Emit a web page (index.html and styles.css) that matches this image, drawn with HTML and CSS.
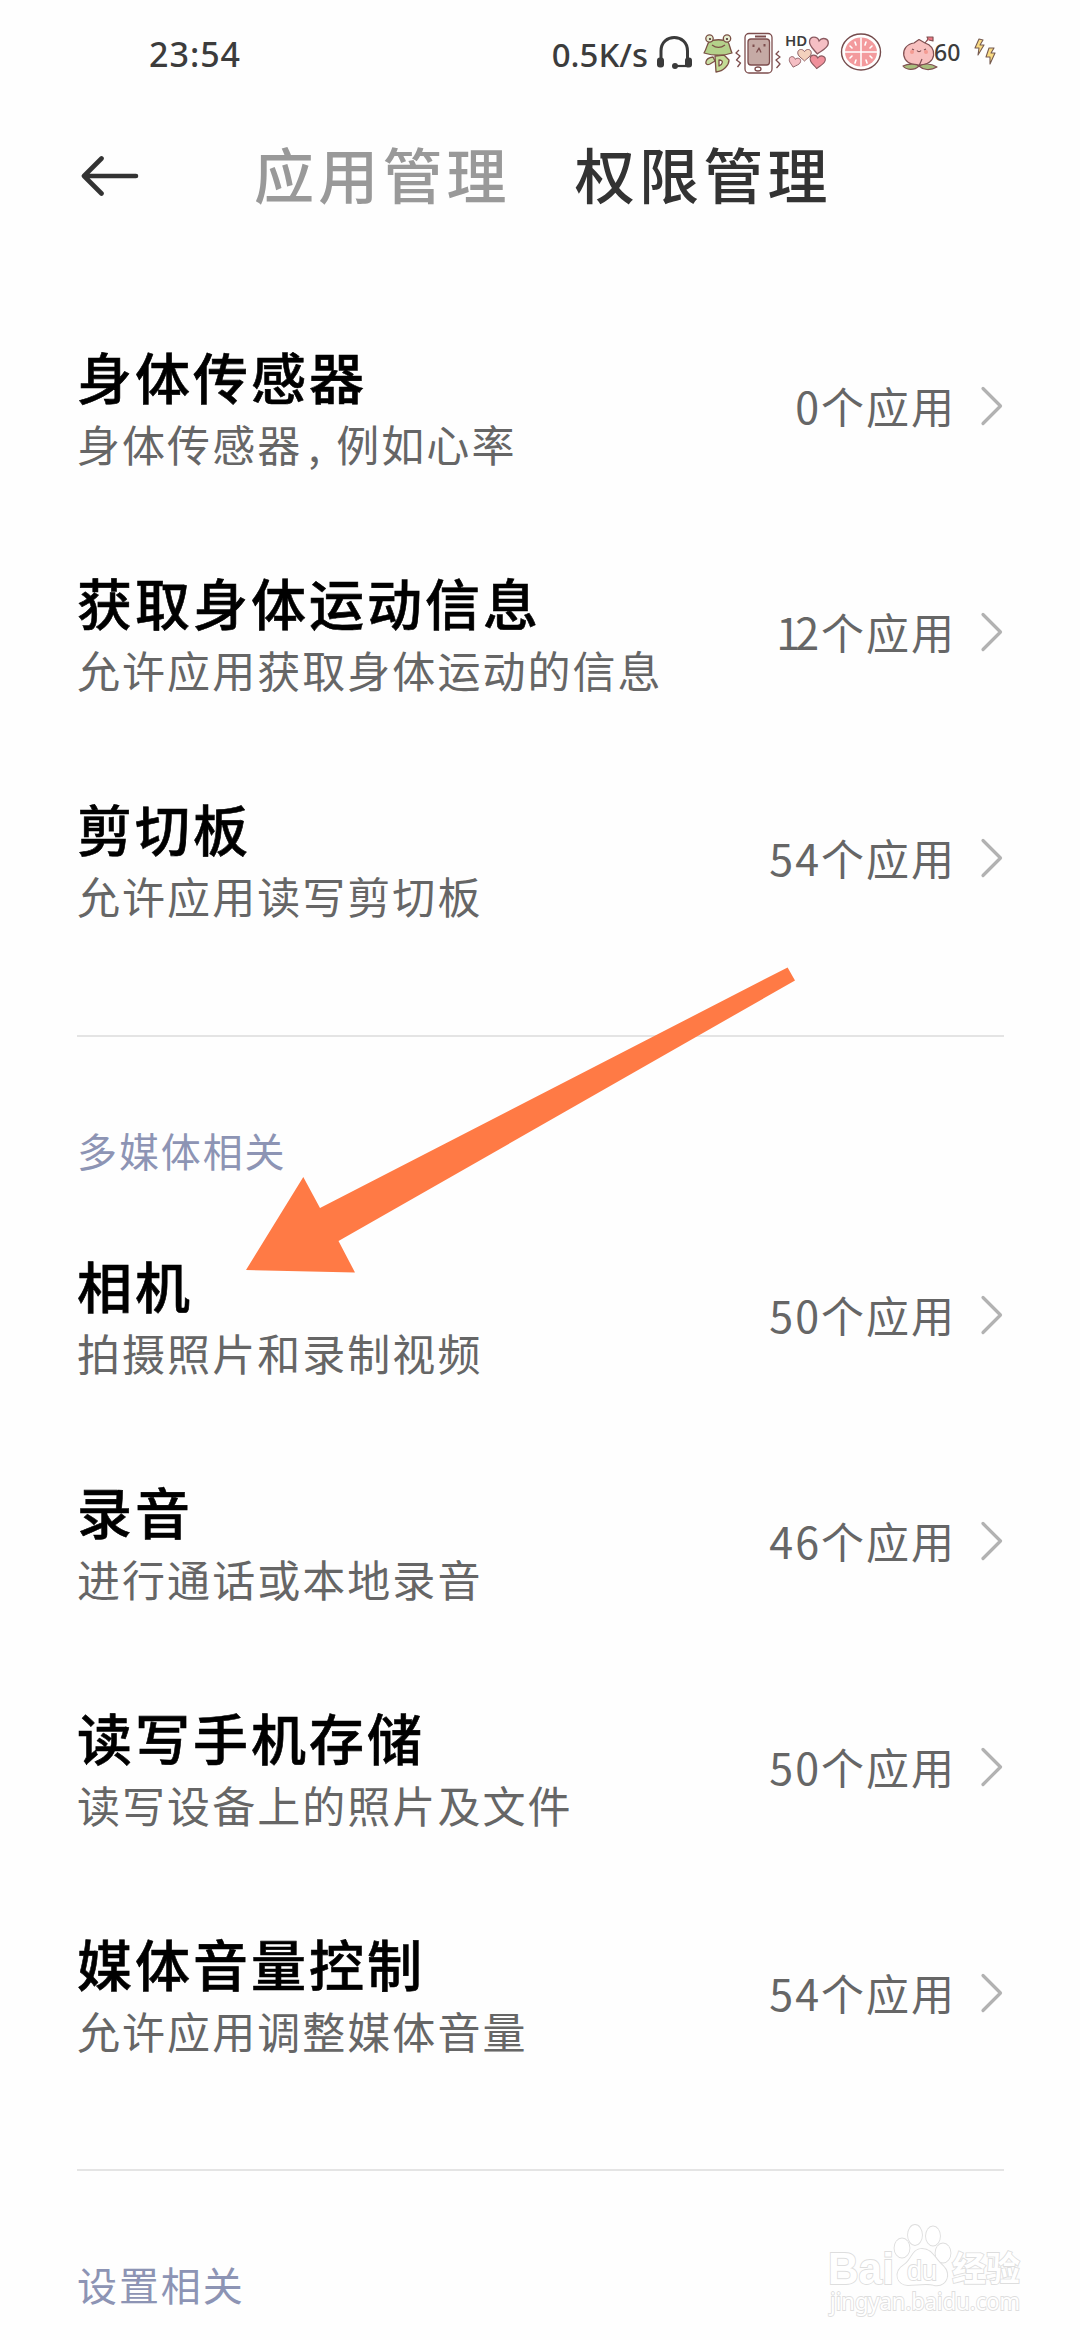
FILE: index.html
```html
<!DOCTYPE html>
<html lang="zh-CN">
<head>
<meta charset="utf-8">
<title>权限管理</title>
<link rel="stylesheet" href="styles.css">
</head>
<body>
<svg width="0" height="0" class="defs">
  <symbol id="chevron" viewBox="0 0 24 42"><path d="M3 3.500L20.500 21L3 38.500" fill="none" stroke="#b2b2b2" stroke-width="3.200" stroke-linecap="round" stroke-linejoin="round"/></symbol>
  <symbol id="heart" viewBox="0 0 20 18"><path d="M10 17C6 13 1 10.500 1 6C1 1 7.500 0 10 4.500C12.500 0 19 1 19 6C19 10.500 14 13 10 17Z" stroke="#8b5a60" stroke-width="1.300"/></symbol>
</svg>
<main class="screen">
  <div class="status">
    <span class="clock">23:54</span>
    <div class="status-right">
      <span class="speed">0.5K/s</span>
      <svg class="status-icons" viewBox="655 30 350 50">
        <g fill="none" stroke="#3a3a3a" stroke-width="3">
          <path d="M661 61V52C661 34 687.500 34 687.500 52V61"/>
          <path d="M675 67H688" stroke-width="2.200"/>
        </g>
        <g fill="#3a3a3a"><rect x="657" y="58.500" width="7" height="10" rx="3"/><rect x="685" y="58.500" width="7" height="10" rx="3"/><circle cx="675" cy="67" r="3"/></g>
        <g stroke="#7a5045" stroke-width="1.300" stroke-linejoin="round">
          <path d="M713 58C704 59 704 68 710 65L715 62Z" fill="#c9dfa3"/>
          <path d="M715 57L716 73C724 72 729 66 729 61L724 56Z" fill="#c3dc95"/>
          <path d="M719 61V67C723 65 724 61 719 61Z" fill="#fff"/>
          <path d="M704 54C707 49 707 45 709 43C714 40 723 40 728 43C730 46 730 50 732 54C723 57 714 57 704 54Z" fill="#b4d18a"/>
          <circle cx="709.500" cy="39.500" r="3.700" fill="#e5edcf"/><circle cx="727" cy="39.500" r="3.700" fill="#e5edcf"/>
          <path d="M712 46C716 49 721 49 725 46" fill="none"/>
        </g>
        <g fill="#4b3030"><circle cx="710" cy="40" r="1.100"/><circle cx="727" cy="40" r="1.100"/></g>
        <g stroke="#7d4d4d" stroke-width="1.300" fill="none" stroke-linejoin="round">
          <rect x="745" y="34.500" width="27" height="39.500" rx="4" fill="#fff"/>
          <rect x="748" y="40" width="21.500" height="26" rx="3" fill="#c5aaa5"/>
          <path d="M755 37.500H766" stroke-width="2"/><ellipse cx="758" cy="70" rx="3" ry="2"/>
          <path d="M756.500 53.500L759 49L761 53.500"/><path d="M753.500 45.500V48M764.500 45V47.500" stroke-width="2"/>
          <path d="M739 51L736 54L740 57L736.500 61L740.500 64L737.500 68M779 52L776 55L780 58L776 61L780 65L776.500 69"/>
        </g>
        <use href="#heart" x="797" y="49" width="15" height="14" fill="#f3d1bd"/>
        <use href="#heart" x="808" y="37" width="21" height="19" fill="#f5bfc4" transform="rotate(8 818 46)"/>
        <use href="#heart" x="788" y="57" width="13" height="12" fill="#f5bfc4" transform="rotate(15 794 63)"/>
        <use href="#heart" x="809" y="55" width="17" height="15.500" fill="#f0909b" transform="rotate(6 817 62)"/>
        <text x="785" y="47" class="hd">HD</text>
        <ellipse cx="861" cy="53" rx="19.500" ry="18" fill="#fff" stroke="#754b4c" stroke-width="1.400"/>
        <ellipse cx="861" cy="53" rx="16" ry="14.500" fill="#f39a9d"/>
        <path d="M861 38.500V67.500M845 53H877" stroke="#fff" stroke-width="1.500"/>
        <path d="M855 43L856 46M850 47L852 49M866 43L865 46M872 47L870 49M850 59L852 57M855 64L856 61M867 64L866 61M872 59L870 57" stroke="#fff" stroke-width="1.600" stroke-linecap="round"/>
        <g stroke="#805052" stroke-width="1.200" stroke-linejoin="round">
          <path d="M919 66C900 67 899 46 914 44L919 40.500L925 44C937 47 938 66 919 66Z" fill="#f8c0bf"/>
          <path d="M925 44L928 40L927 38L933 38L933 42L929 41" fill="#ee7884"/>
          <path d="M903 67C909 64 917 65 919 67C914 72 906 71 903 67ZM919 67C925 64 932 65 937 68C930 72 923 71 919 67Z" fill="#a8bd7c"/>
          <path d="M919 67L922 60M917 51.500C918 53 920 53 921 51.500M912 50L914 51M924 51L926 50" fill="none"/>
        </g>
        <circle cx="912" cy="53" r="2" fill="#f49a92"/><circle cx="926" cy="53" r="2" fill="#f49a92"/>
        <text x="934" y="62" class="battery">60</text>
        <g fill="#f9db83" stroke="#765b50" stroke-width="1.100" stroke-linejoin="round">
          <path d="M979 40L975 49L979 49L978 56L984 46L980 46L983 41Z"/><path d="M989 49L986 58L990 58L990 65L995 54L991 54L994 49Z"/>
        </g>
      </svg>
    </div>
  </div>
  <header class="header">
    <svg class="back" viewBox="0 0 58 42"><path d="M55 21H4M20.500 3.500L3 21L20.500 38.500" fill="none" stroke="#333" stroke-width="4.600" stroke-linecap="round" stroke-linejoin="round"/></svg>
    <span class="tab">应用管理</span>
    <span class="tab active">权限管理</span>
  </header>
  <section class="group">
    <div class="row"><div class="info"><div class="name">身体传感器</div><div class="desc">身体传感器<span class="comma">,</span>例如心率</div></div><span class="count">0个应用</span><svg class="chev"><use href="#chevron"/></svg></div>
    <div class="row"><div class="info"><div class="name">获取身体运动信息</div><div class="desc">允许应用获取身体运动的信息</div></div><span class="count"><span class="narrow">1</span>2个应用</span><svg class="chev"><use href="#chevron"/></svg></div>
    <div class="row"><div class="info"><div class="name">剪切板</div><div class="desc">允许应用读写剪切板</div></div><span class="count">54个应用</span><svg class="chev"><use href="#chevron"/></svg></div>
  </section>
  <section class="group divided">
    <h2 class="group-title">多媒体相关</h2>
    <div class="row"><div class="info"><div class="name">相机</div><div class="desc">拍摄照片和录制视频</div></div><span class="count">50个应用</span><svg class="chev"><use href="#chevron"/></svg></div>
    <div class="row"><div class="info"><div class="name">录音</div><div class="desc">进行通话或本地录音</div></div><span class="count">46个应用</span><svg class="chev"><use href="#chevron"/></svg></div>
    <div class="row"><div class="info"><div class="name">读写手机存储</div><div class="desc">读写设备上的照片及文件</div></div><span class="count">50个应用</span><svg class="chev"><use href="#chevron"/></svg></div>
    <div class="row"><div class="info"><div class="name">媒体音量控制</div><div class="desc">允许应用调整媒体音量</div></div><span class="count">54个应用</span><svg class="chev"><use href="#chevron"/></svg></div>
  </section>
  <section class="group divided">
    <h2 class="group-title">设置相关</h2>
  </section>
  <svg class="pointer" viewBox="0 0 550 306"><path d="M0 303L57.300 210L74 241L541.600 .400L549 13.500L92.500 274L109 305.500Z" fill="#ff7a45"/></svg>
  <svg class="watermark" viewBox="820 2215 210 110">
    <g class="mark">
      <text x="828" y="2284" class="wm-bai" textLength="66" lengthAdjust="spacingAndGlyphs">Bai</text>
      <ellipse cx="902" cy="2248" rx="7.500" ry="9.500"/><ellipse cx="915" cy="2235" rx="7" ry="10"/><ellipse cx="933" cy="2236" rx="7" ry="9.500"/><ellipse cx="943" cy="2253" rx="7.500" ry="9.500"/>
      <path d="M922 2249C912 2249 912 2260 904 2265C893 2272 897 2285 908 2285C916 2285 927 2283 934 2285C947 2287 951 2274 943 2266C934 2258 932 2249 922 2249Z"/>
      <text x="907" y="2280" class="wm-du" textLength="30" lengthAdjust="spacingAndGlyphs">du</text>
      <text x="952" y="2281" class="wm-cn">经验</text>
      <text x="830" y="2310" class="wm-url" textLength="190" lengthAdjust="spacingAndGlyphs">jingyan.baidu.com</text>
    </g>
  </svg>
</main>
</body>
</html>
```
FILE: styles.css
```css
* { box-sizing: border-box; }
body { margin: 0; background: #fefefe; font-family: "Noto Sans CJK SC", sans-serif; }
.defs { position: absolute; }
.screen { position: relative; width: 1080px; height: 2340px; overflow: hidden; }

.status { display: flex; justify-content: space-between; align-items: center; height: 108px; padding: 0 75px 0 149px; font-family: "Noto Sans", sans-serif; font-weight: 500; font-size: 34px; color: #3c3c3c; }
.clock { letter-spacing: 1px; }
.status-right { display: flex; align-items: center; gap: 7px; }
.speed { font-size: 33px; }
.status-icons { width: 350px; height: 50px; }
.hd { font: 600 15px "Noto Sans", sans-serif; fill: #3c3c3c; }
.battery { font: 500 23px "Noto Sans", sans-serif; fill: #3c3c3c; }

.header { display: flex; align-items: center; height: 135px; padding-left: 81px; font-size: 60px; line-height: 90px; letter-spacing: 4.200px; font-weight: 500; }
.back { width: 58px; height: 42px; margin-right: 115px; }
.tab { color: #999; margin-right: 64px; margin-top: -5px; }
.tab.active { color: #333; }

.group { padding: 0 76px 0 77px; }
.header + .group { padding-top: 49px; padding-bottom: 65px; }
.divided { padding-bottom: 64px; }
.divided::before { content: ""; display: block; height: 2px; background: #e4e4e4; }
.group-title { margin: 0; height: 164px; padding-top: 83px; font-size: 40px; line-height: 60px; letter-spacing: 1.900px; font-weight: 400; color: #8d94b4; }
.row { display: flex; align-items: center; height: 226px; }
.info { flex: 1; margin-top: -1px; }
.name { font-size: 55px; line-height: 76px; letter-spacing: 3px; font-weight: 500; color: #000; white-space: nowrap; -webkit-text-stroke: 0.6px #000; }
.desc { font-size: 43px; line-height: 60px; letter-spacing: 2.050px; color: #666; white-space: nowrap; }
.comma { display: inline-block; width: 34px; padding-left: 6px; }
.count { font-size: 43px; line-height: 60px; letter-spacing: 2px; color: #666; margin-right: 24px; }
.narrow { letter-spacing: -5px; }
.chev { width: 24px; height: 42px; margin-top: 2px; }

.pointer { position: absolute; left: 246px; top: 967px; width: 550px; height: 306px; }
.watermark { position: absolute; left: 820px; top: 2215px; width: 210px; height: 110px; }
.mark { fill: #fff; stroke: #dedede; stroke-width: 1.800px; paint-order: stroke; }
.wm-bai { font: 700 44px "Liberation Sans", sans-serif; }
.wm-du { font: 400 28px "Liberation Sans", sans-serif; }
.wm-cn { font: 700 34px "Noto Sans CJK SC", sans-serif; }
.wm-url { font: 400 23px "Noto Sans", sans-serif; }
```
